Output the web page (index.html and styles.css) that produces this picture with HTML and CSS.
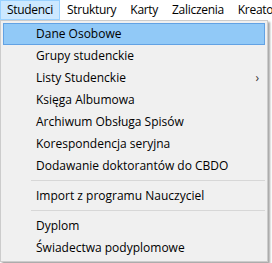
FILE: index.html
```html
<!DOCTYPE html>
<html lang="pl">
  <head>
    <meta charset="UTF-8" />
    <title>Menu</title>
    <link rel="stylesheet" href="styles.css">
  </head>
  <body>
    <div class="menubar">
      <div class="top-item active">Studenci</div>
      <div class="top-item">Struktury</div>
      <div class="top-item">Karty</div>
      <div class="top-item">Zaliczenia</div>
      <div class="top-item">Kreator</div>
    </div>
    <div class="dropdown">
      <div class="item selected">Dane Osobowe</div>
      <div class="item">Grupy studenckie</div>
      <div class="item">Listy Studenckie <span class="arrow">&#8250;</span></div>
      <div class="item">Księga Albumowa</div>
      <div class="item">Archiwum Obsługa Spisów</div>
      <div class="item">Korespondencja seryjna</div>
      <div class="item">Dodawanie doktorantów do CBDO</div>
      <div class="separator"></div>
      <div class="item">Import z programu Nauczyciel</div>
      <div class="separator"></div>
      <div class="item">Dyplom</div>
      <div class="item">Świadectwa podyplomowe</div>
    </div>
  </body>
</html>
```

FILE: styles.css
```css
* {
  box-sizing: border-box;
}
body {
  margin: 0;
  width: 272px;
  height: 263px;
  overflow: hidden;
  background: #ffffff;
  font-family: "Open Sans", "Noto Sans", sans-serif;
  font-size: 12px;
  color: #000;
}
.menubar {
  display: flex;
  height: 20px;
  background: #ffffff;
  white-space: nowrap;
  letter-spacing: -0.3px;
}
.top-item {
  padding: 0 6px;
  line-height: 18px;
  border: 1px solid transparent;
}
.top-item.active {
  background: #cce8ff;
  border-color: #99d1ff;
}
.dropdown {
  width: 268px;
  background: #f0f0f0;
  border: 1px solid #cccccc;
  padding: 2px;
  box-shadow: 2px 2px 2px rgba(0, 0, 0, 0.35);
}
.item {
  position: relative;
  height: 22px;
  line-height: 20px;
  padding-left: 32px;
  border: 1px solid transparent;
  white-space: nowrap;
}
.item.selected {
  background: #91c9f7;
  border-color: #62a2e4;
}
.arrow {
  position: absolute;
  right: 5px;
  top: 0;
  color: #333;
}
.separator {
  height: 1px;
  background: #d7d7d7;
  margin: 3px 0 4px 28px;
}
```
